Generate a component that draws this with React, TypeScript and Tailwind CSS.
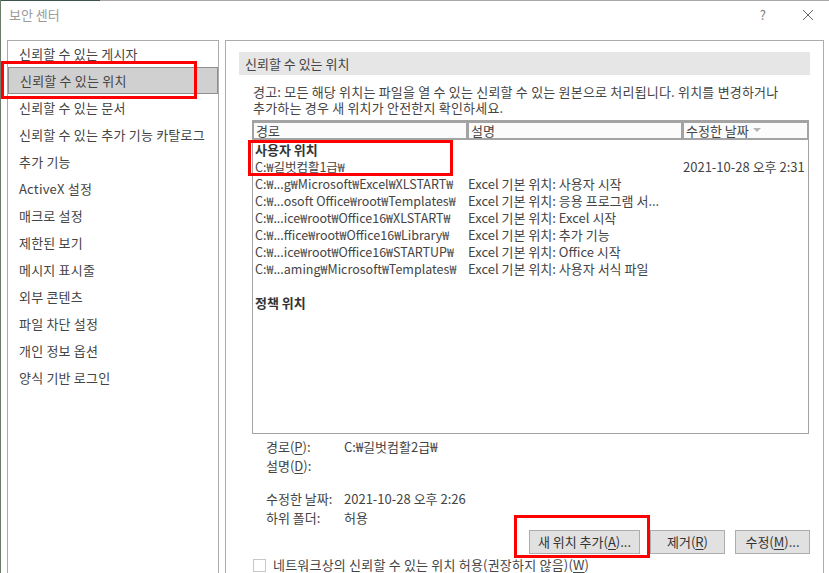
import React from "react";

const U = ({ c }: { c: string }) => <span className="underline underline-offset-2">{c}</span>;

const navItems = [
  "신뢰할 수 있는 게시자",
  "신뢰할 수 있는 위치",
  "신뢰할 수 있는 문서",
  "신뢰할 수 있는 추가 기능 카탈로그",
  "추가 기능",
  "ActiveX 설정",
  "매크로 설정",
  "제한된 보기",
  "메시지 표시줄",
  "외부 콘텐츠",
  "파일 차단 설정",
  "개인 정보 옵션",
  "양식 기반 로그인",
];

type Row = { path?: string; desc?: string; date?: string; bold?: string };
const rows: Row[] = [
  { bold: "사용자 위치" },
  { path: "C:₩길벗컴활1급₩", date: "2021-10-28 오후 2:31" },
  { path: "C:₩...g₩Microsoft₩Excel₩XLSTART₩", desc: "Excel 기본 위치: 사용자 시작" },
  { path: "C:₩...osoft Office₩root₩Templates₩", desc: "Excel 기본 위치: 응용 프로그램 서..." },
  { path: "C:₩...ice₩root₩Office16₩XLSTART₩", desc: "Excel 기본 위치: Excel 시작" },
  { path: "C:₩...ffice₩root₩Office16₩Library₩", desc: "Excel 기본 위치: 추가 기능" },
  { path: "C:₩...ice₩root₩Office16₩STARTUP₩", desc: "Excel 기본 위치: Office 시작" },
  { path: "C:₩...aming₩Microsoft₩Templates₩", desc: "Excel 기본 위치: 사용자 서식 파일" },
  {},
  { bold: "정책 위치" },
];

export default function App() {
  return (
    <div
      className="relative w-[829px] h-[573px] overflow-hidden bg-white text-[13px] text-[#444444] flex flex-col"
      style={{ fontFamily: '"Noto Sans CJK KR", "Noto Sans", sans-serif' }}
    >
      {/* background strips */}
      <div className="absolute left-0 top-0 w-[829px] h-px bg-[#a9a9a9]" />
      <div className="absolute left-0 top-0 w-[100px] h-px bg-[#3c5548]" />
      <div className="absolute left-0 top-0 w-px h-[573px] bg-[#6b7a6a]" />

      {/* title bar */}
      <div className="h-[40px] shrink-0 flex items-start pt-[5px] pl-[9px] pr-[15px]">
        <div className="text-[#9a9a9a] leading-[20px]">보안 센터</div>
        <div className="ml-auto flex items-center gap-[36px] h-[20px]">
          <span className="text-[#7a7a7a] text-[13px]">?</span>
          <svg width="12" height="12" viewBox="0 0 12 12">
            <path d="M1 1 L11 11 M11 1 L1 11" stroke="#6a6a6a" strokeWidth="1" />
          </svg>
        </div>
      </div>

      {/* body */}
      <div className="flex shrink-0 pl-[7px] gap-[6px]">
        {/* left nav */}
        <div className="w-[212px] h-[560px] border border-[#ababab]">
          <div className="-mt-px">
            {navItems.map((t, i) => (
              <div
                key={t}
                className={
                  "h-[27px] flex items-center pl-[11px] whitespace-nowrap tracking-[0.2px] " +
                  (i === 1 ? "bg-[#d0d0d0] border border-[#8f8f8f] pl-[10px]" : "")
                }
              >
                {t}
              </div>
            ))}
          </div>
        </div>

        {/* right panel */}
        <div className="w-[599px] h-[560px] border border-[#ababab] px-[13px] pt-[11px]">
          <div className="h-[23px] bg-[#e6e6e6] flex items-center pl-[6px]">신뢰할 수 있는 위치</div>
          <div className="pl-[14px] pt-[9px] leading-[16px] whitespace-nowrap tracking-[0.2px]">
            <div>경고: 모든 해당 위치는 파일을 열 수 있는 신뢰할 수 있는 원본으로 처리됩니다. 위치를 변경하거나</div>
            <div>추가하는 경우 새 위치가 안전한지 확인하세요.</div>
          </div>

          {/* table */}
          <div className="ml-[13px] mt-[4px] w-[557px] h-[314px] border border-[#a3a3a3] flex flex-col">
            <div className="h-[19px] shrink-0 bg-[#a3a3a3] flex gap-[3px] px-px py-[2px]">
              <div className="w-[212px] bg-[#fbfbfb] flex items-center pl-[2px] leading-[15px]">경로</div>
              <div className="w-[212px] bg-[#fbfbfb] flex items-center pl-[2px] leading-[15px]">설명</div>
              <div className="flex-1 bg-[#fbfbfb] flex items-center pl-[2px] leading-[15px]">
                수정한 날짜
                <svg width="8" height="5" viewBox="0 0 8 5" className="ml-[4px]">
                  <path d="M0 0 L8 0 L4 4 Z" fill="#b5b5b5" />
                </svg>
              </div>
            </div>
            <div className="pt-px">
              {rows.map((r, i) => (
                <div key={i} className="h-[17px] flex items-center leading-[17px] whitespace-nowrap">
                  {r.bold ? (
                    <div className="pl-[2px] font-bold text-[#333333]">{r.bold}</div>
                  ) : (
                    <>
                      <div className="w-[215px] pl-[2px] text-[12.5px]">{r.path ?? ""}</div>
                      <div className="w-[215px]">{r.desc ?? ""}</div>
                      <div className="flex-1">{r.date ?? ""}</div>
                    </>
                  )}
                </div>
              ))}
            </div>
          </div>

          {/* details */}
          <div className="ml-[27px] mt-[3px]">
            <div className="h-[19px] flex items-center">
              <div className="w-[78px]">경로(<U c="P" />):</div>
              <div>C:₩길벗컴활2급₩</div>
            </div>
            <div className="h-[19px] flex items-center">
              <div className="w-[78px]">설명(<U c="D" />):</div>
            </div>
            <div className="h-[19px] flex items-center mt-[14px]">
              <div className="w-[78px]">수정한 날짜:</div>
              <div>2021-10-28 오후 2:26</div>
            </div>
            <div className="h-[19px] flex items-center">
              <div className="w-[78px]">하위 폴더:</div>
              <div>허용</div>
            </div>
          </div>

          {/* buttons */}
          <div className="flex justify-end gap-[10px] mt-[3px]">
            <button className="w-[111px] h-[24px] bg-[#e1e1e1] border border-[#adadad] text-[#333333] whitespace-nowrap">
              새 위치 추가(<U c="A" />)...
            </button>
            <button className="w-[75px] h-[24px] bg-[#e1e1e1] border border-[#adadad] text-[#333333]">
              제거(<U c="R" />)
            </button>
            <button className="w-[75px] h-[24px] bg-[#e1e1e1] border border-[#adadad] text-[#333333]">
              수정(<U c="M" />)...
            </button>
          </div>

          {/* checkbox */}
          <div className="flex items-center mt-[4px] ml-[14px]">
            <div className="w-[13px] h-[13px] border border-[#c8c8c8] bg-white" />
            <div className="ml-[7px] leading-[14px] whitespace-nowrap tracking-[0.2px]">
              네트워크상의 신뢰할 수 있는 위치 허용(권장하지 않음)(<U c="W" />)
            </div>
          </div>
        </div>
      </div>

      {/* red highlight boxes */}
      <div className="absolute left-[1px] top-[61px] w-[196px] h-[38px] border-[3px] border-[#ff0000]" />
      <div className="absolute left-[248px] top-[140px] w-[205px] h-[36px] border-[3px] border-[#ff0000]" />
      <div className="absolute left-[514px] top-[515px] w-[136px] h-[43px] border-[3px] border-[#ff0000]" />
    </div>
  );
}
